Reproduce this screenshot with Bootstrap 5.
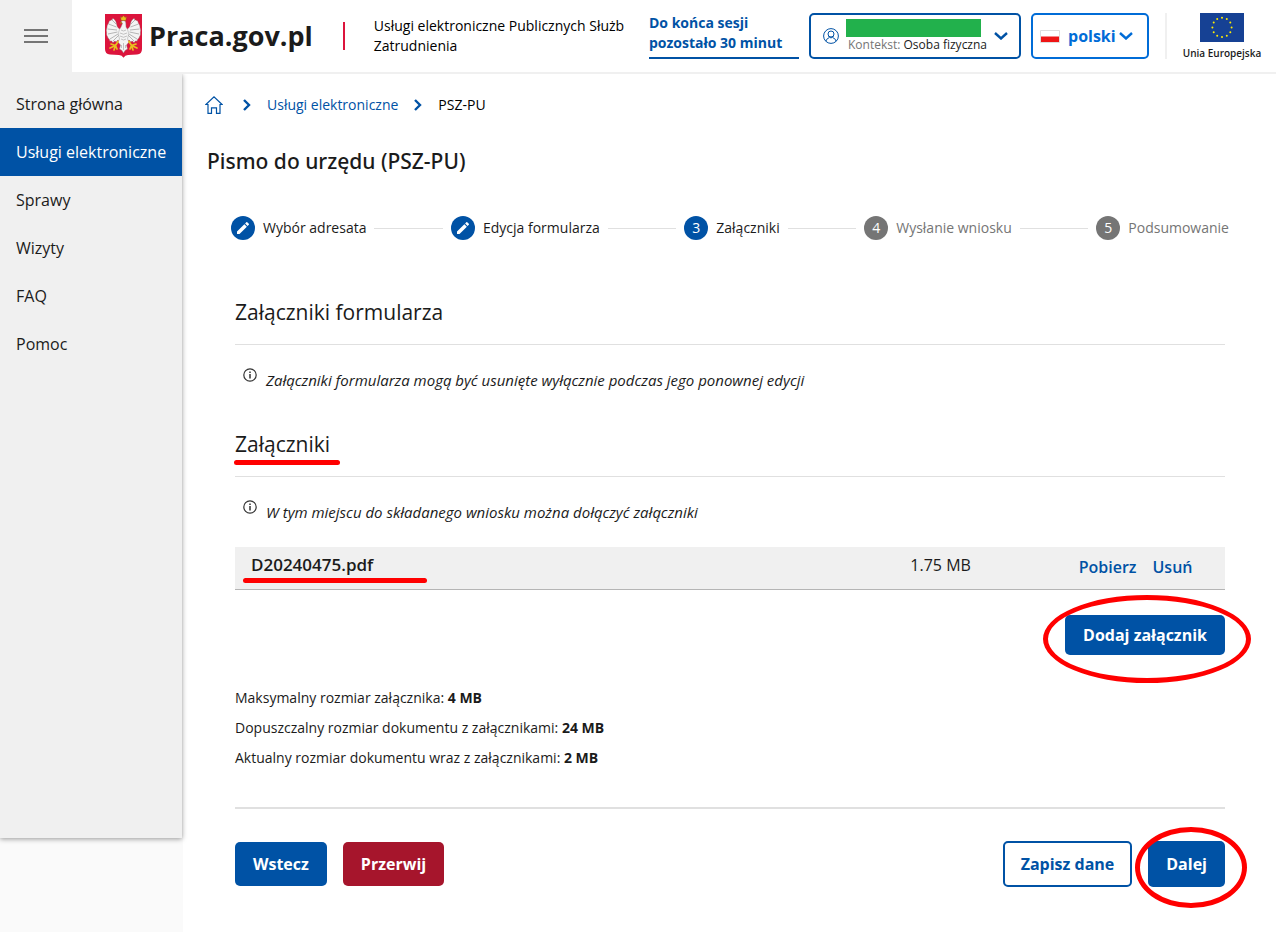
<!DOCTYPE html>
<html lang="pl">
<head>
<meta charset="utf-8">
<meta name="viewport" content="width=device-width, initial-scale=1">
<title>Pismo do urzędu (PSZ-PU) – Praca.gov.pl</title>
<link href="https://cdn.jsdelivr.net/npm/bootstrap@5.3.0/dist/css/bootstrap.min.css" rel="stylesheet">
<style>
  :root { --blue: #0052a5; --bright: #006cd7; --ink: #1b1b1b; --soft: #f0f0f0; --rule: #e0e0e0; }
  body { font-family: "Open Sans", "Noto Sans", sans-serif; font-size: 14px; line-height: 20px; color: var(--ink); }
  a { color: var(--blue); text-decoration: none; }
  svg { display: block; flex: none; }
  .topbar { border-bottom: 2px solid var(--soft); }
  .menu-toggle { width: 72px; height: 74px; background: var(--soft); border: 0; margin-bottom: -2px; padding: 0 24px 2px; }
  .brand { color: var(--ink); font-size: 27px; font-weight: 700; line-height: 40px; margin-left: 33px; gap: 7px; }
  .brand-rule { width: 2px; height: 28px; background: #dc143c; margin-left: 30px; }
  .tagline { width: 260px; margin-left: 29px; color: #000; }
  .session { width: 150px; color: var(--blue); font-weight: 700; border-bottom: 2px solid var(--blue); padding-bottom: 4px; }
  .head-btn { height: 46px; border: 2px solid var(--blue); border-radius: 5px; background: #fff; color: var(--ink); margin-left: 10px; padding: 0 14px 0 12px; }
  .user-btn { width: 212px; gap: 7px; }
  .user-name { width: 135px; height: 18px; background: #22b14c; }
  .user-ctx { font-size: 12px; line-height: 16px; padding-left: 2px; white-space: nowrap; }
  .user-ctx span { color: #757575; }
  .lang-btn { width: 118px; border-color: var(--bright); color: var(--bright); font-size: 16px; font-weight: 700; padding: 0 14px 0 7px; }
  .eu { border-left: 2px solid var(--soft); height: 46px; padding-left: 17px; width: 95px; font-size: 10px; font-weight: 600; line-height: 14px; white-space: nowrap; }
  .side { width: 183px; background: #fafafa; padding-bottom: 94px; }
  .side-nav { background: var(--soft); width: 182px; padding-top: 6px; box-shadow: 0 1px 5px rgba(0,0,0,.4); clip-path: inset(0 -8px -8px 0); }
  .side-nav .nav-link { color: var(--ink); font-size: 16px; line-height: 24px; padding: 12px 16px; white-space: nowrap; }
  .side-nav .nav-link.active { background: var(--blue); color: #fff; }
  .crumbs { padding: 21px 0 0 22px; gap: 16px; line-height: 20px; }
  .page-title { font-family: "Noto Sans", sans-serif; font-size: 21px; font-weight: 500; line-height: 28px; margin: 32px 0 0 24px; }
  .steps { margin: 41px 47px 0 48px; padding: 0; gap: 8px; list-style: none; }
  .step { gap: 8px; white-space: nowrap; }
  .step-dot { width: 24px; height: 24px; border-radius: 50%; background: var(--blue); color: #fff; }
  .step-off { color: #757575; }
  .step-off .step-dot { background: #757575; }
  .step-line { height: 1px; background: var(--rule); }
  .body-block { margin: 0 51px 0 52px; }
  .sect { font-size: 21px; font-weight: 400; line-height: 32px; padding-bottom: 16px; margin: 56px 0 0; border-bottom: 1px solid var(--rule); }
  .hint + .sect { margin-top: 36px; }
  .hint { font-size: 15px; padding: 23px 8px 0; gap: 9px; font-style: italic; line-height: 24px; margin: 0; }
  .files { --bs-table-bg: var(--soft); border-color: #b5b5b5; color: var(--ink); font-size: 16px; line-height: 24px; table-layout: fixed; margin: 23px 0 25px; }
  .files > tbody > tr > td { padding: 6px 16px 12px; }
  .files > tbody > tr > .file-acts { padding: 8px 0 10px 16px; font-weight: 600; }
  .act-btn { border: 0; border-radius: 5px; background: var(--blue); color: #fff; font-size: 16px; font-weight: 700; line-height: 24px; padding: 10px 18px; }
  .act-red { background: #a6152c; }
  .act-line { background: #fff; color: var(--blue); border: 2px solid var(--blue); padding: 9px 16px; }
  .act-short { padding: 8px 18px; }
  .act-tall { padding: 11px 18px; }
  .limits { line-height: 30px; margin: 28px 0 0; }
  .limits b { font-weight: 700; }
  .end-rule { height: 2px; background: var(--rule); margin: 34px 0 32px; }
  /* red marker annotations */
  .marked { position: relative; }
  .marked::after { content: ""; position: absolute; height: 5px; border-radius: 3px; background: #f00; }
  .mark-head::after { left: -1px; right: -10px; bottom: -7px; }
  .mark-file { font-size: 17px; font-weight: 600; }
  .mark-file::after { left: -8px; width: 184px; bottom: -7px; }
  .ringed::after { content: ""; position: absolute; border: 5px solid #f00; border-radius: 50%; pointer-events: none; }
  .ringed.ring-add::after { inset: -20px -26px -28px -22px; }
  .ringed.ring-next::after { inset: -14px -22px -21px -13px; }
</style>
</head>
<body class="d-flex flex-column min-vh-100 bg-white">

<header class="topbar d-flex align-items-center">
  <button class="menu-toggle" type="button" aria-label="Menu">
    <svg width="24" height="14" viewBox="0 0 24 14" fill="#757575"><path d="M0 0h24v2H0zM0 6h24v2H0zM0 12h24v2H0z"/></svg>
  </button>
  <a class="brand d-flex align-items-center" href="#">
    <svg width="37" height="44" viewBox="0 0 37 44">
      <path d="M0 0h37v35q0 5-5 5.500l-9 .5q-3 .3-4.500 2.700Q17 41.300 14 41l-9-.5Q0 40 0 35z" fill="#dc143c"/>
      <g fill="#f4f4f4" stroke="#8d5358" stroke-width=".4">
        <path d="M17.500 15C14 16 12 13 11.500 9.500 11 6.500 9 4.500 7.500 4.200 8 6 6 6 5 6.500 3.500 7.500 4 9 3 10 1.500 11.500 2.500 13 1.500 15 .8 17 2 18 1.500 20 1.500 22 3 22.500 3 24.500 4 24 4.500 25.500 5 27.500 6 26.500 7 27 8 29 9 27 10 27 11.500 28 12 26 13.500 26 14.500 27L18 22z"/>
        <path d="M11 10 7 6M11.500 13 3.500 10M12 16 2.500 15M12.500 18 3 20M13 20 5 25M14 21 8 27" fill="none" stroke-width=".7" stroke="#999"/>
      </g>
      <g transform="matrix(-1 0 0 1 37 0)" fill="#f4f4f4" stroke="#8d5358" stroke-width=".4">
        <path d="M17.500 15C14 16 12 13 11.500 9.500 11 6.500 9 4.500 7.500 4.200 8 6 6 6 5 6.500 3.500 7.500 4 9 3 10 1.500 11.500 2.500 13 1.500 15 .8 17 2 18 1.500 20 1.500 22 3 22.500 3 24.500 4 24 4.500 25.500 5 27.500 6 26.500 7 27 8 29 9 27 10 27 11.500 28 12 26 13.500 26 14.500 27L18 22z"/>
        <path d="M11 10 7 6M11.500 13 3.500 10M12 16 2.500 15M12.500 18 3 20M13 20 5 25M14 21 8 27" fill="none" stroke-width=".7" stroke="#999"/>
      </g>
      <path d="M15.800 8 18 6.500Q21 6.500 20.800 9.500L21 13Q25 18 22.500 25L24 28 21.500 31 22.500 35 20 36.500 18.500 39 17 36.500 14.500 35 15.500 31 13 28 14.500 25Q12 18 16 13L17.500 9.500z" fill="#f4f4f4" stroke="#888" stroke-width=".4"/>
      <path d="M16 16q2.500 2 5 0M15 19q3.500 2.500 7 0M15 22q3.500 2.500 7 0M16 25q2.500 2 5 0M18.500 29v7M16.500 31v3M20.500 31v3" fill="none" stroke="#aaa" stroke-width=".7"/>
      <path d="M15.500 2.500 17 3.500 18.500 1.500 20 3.500 21.500 2.500 20.800 6.500H16.200zM15.800 8l-1 1.500 2.500-.5z" fill="#e8c020" stroke="#8a5510" stroke-width=".4"/>
      <path d="M13 27.500 10.500 31.500 6 30M10.500 31.500 5 34M10.500 31.500 9 36M10.500 31.500 12 35M24 27.500 26.500 31.500 31 30M26.500 31.500 32 34M26.500 31.500 28 36M26.500 31.500 25 35" fill="none" stroke="#e8c020" stroke-width="1.700" stroke-linecap="round"/>
    </svg>
    <span>Praca.gov.pl</span>
  </a>
  <div class="brand-rule"></div>
  <div class="tagline">Usługi elektroniczne Publicznych Służb Zatrudnienia</div>
  <div class="session ms-auto">Do końca sesji pozostało 30 minut</div>
  <button class="head-btn user-btn d-flex align-items-center" type="button">
    <svg width="16" height="16" viewBox="0 0 16 16" fill="none" stroke="#0052a5"><circle cx="8" cy="8" r="7.400"/><circle cx="8" cy="6" r="3"/><path d="M2.800 13.200Q4 10 6.200 9.700M13.200 13.200Q12 10 9.800 9.700M5.500 8.500Q8 11.500 10.500 8.500"/></svg>
    <span class="text-start">
      <span class="user-name d-block"></span>
      <span class="user-ctx d-block"><span>Kontekst:</span> Osoba fizyczna</span>
    </span>
    <svg class="ms-auto" width="14" height="8" viewBox="0 0 14 8" fill="none" stroke="#0052a5" stroke-width="2.400"><path d="M1 1l6 5.500L13 1"/></svg>
  </button>
  <button class="head-btn lang-btn d-flex align-items-center" type="button">
    <svg width="20" height="13" viewBox="0 0 20 13"><path d="M.5.500h19v12H.5z" fill="#fff" stroke="#ddd"/><path d="M1 6.500h18V12H1z" fill="#ee1515"/></svg>
    <span class="ms-2">polski</span>
    <svg class="ms-auto" width="14" height="8" viewBox="0 0 14 8" fill="none" stroke="#006cd7" stroke-width="2.400"><path d="M1 1l6 5.500L13 1"/></svg>
  </button>
  <div class="eu d-flex flex-column align-items-center ms-3 me-3">
    <svg width="44" height="29" viewBox="0 0 44 29"><path d="M0 0h44v29H0z" fill="#164194"/><path d="M22 4.800h.01M26.800 6.100h.01M30.300 9.600h.01M31.600 14.400h.01M30.300 19.200h.01M26.800 22.700h.01M22 24h.01M17.200 22.700h.01M13.700 19.200h.01M12.400 14.400h.01M13.700 9.600h.01M17.200 6.100h.01" stroke="#ffed00" stroke-width="2" stroke-linecap="round"/></svg>
    <span class="mt-1">Unia Europejska</span>
  </div>
</header>

<div class="d-flex flex-grow-1">
  <aside class="side d-flex flex-column flex-shrink-0">
    <nav class="side-nav nav flex-column flex-nowrap flex-grow-1">
      <a class="nav-link" href="#">Strona główna</a>
      <a class="nav-link active" href="#" aria-current="page">Usługi elektroniczne</a>
      <a class="nav-link" href="#">Sprawy</a>
      <a class="nav-link" href="#">Wizyty</a>
      <a class="nav-link" href="#">FAQ</a>
      <a class="nav-link" href="#">Pomoc</a>
    </nav>
  </aside>

  <main class="flex-grow-1">
    <nav class="crumbs d-flex align-items-center" aria-label="Okruszki">
      <a class="me-1" href="#" aria-label="Strona główna"><svg width="18" height="18" viewBox="0 0 18 18" fill="none" stroke="#0052a5" stroke-width="1.200"><path d="M3 8.500H.9L9 .9l8.100 7.600H15v8.900h-3.500v-5.500h-5v5.500H3z"/></svg></a>
      <svg width="8" height="12" viewBox="0 0 8 12" fill="none" stroke="#0052a5" stroke-width="2.400"><path d="M1 1l5 5-5 5"/></svg>
      <a href="#">Usługi elektroniczne</a>
      <svg width="8" height="12" viewBox="0 0 8 12" fill="none" stroke="#0052a5" stroke-width="2.400"><path d="M1 1l5 5-5 5"/></svg>
      <span class="text-black">PSZ-PU</span>
    </nav>

    <h1 class="page-title">Pismo do urzędu (PSZ-PU)</h1>

    <ol class="steps d-flex align-items-center">
      <li class="step d-flex align-items-center"><span class="step-dot d-flex align-items-center justify-content-center"><svg width="16" height="16" viewBox="0 0 24 24" fill="#fff"><path d="M3 17.250V21h3.750L17.810 9.940l-3.750-3.750L3 17.250zM20.710 7.040a1 1 0 0 0 0-1.410l-2.340-2.340a1 1 0 0 0-1.410 0l-1.830 1.830 3.750 3.750 1.830-1.830z"/></svg></span>Wybór adresata</li>
      <li class="step-line flex-fill" aria-hidden="true"></li>
      <li class="step d-flex align-items-center"><span class="step-dot d-flex align-items-center justify-content-center"><svg width="16" height="16" viewBox="0 0 24 24" fill="#fff"><path d="M3 17.250V21h3.750L17.810 9.940l-3.750-3.750L3 17.250zM20.710 7.040a1 1 0 0 0 0-1.410l-2.340-2.340a1 1 0 0 0-1.410 0l-1.830 1.830 3.750 3.750 1.830-1.830z"/></svg></span>Edycja formularza</li>
      <li class="step-line flex-fill" aria-hidden="true"></li>
      <li class="step d-flex align-items-center" aria-current="step"><span class="step-dot d-flex align-items-center justify-content-center">3</span>Załączniki</li>
      <li class="step-line flex-fill" aria-hidden="true"></li>
      <li class="step step-off d-flex align-items-center"><span class="step-dot d-flex align-items-center justify-content-center">4</span>Wysłanie wniosku</li>
      <li class="step-line flex-fill" aria-hidden="true"></li>
      <li class="step step-off d-flex align-items-center"><span class="step-dot d-flex align-items-center justify-content-center">5</span>Podsumowanie</li>
    </ol>

    <div class="body-block">
      <h2 class="sect">Załączniki formularza</h2>
      <p class="hint d-flex"><svg width="14" height="14" viewBox="0 0 14 14" fill="none" stroke="#333" stroke-width="1.200"><circle cx="7" cy="7" r="6.200"/><path d="M7 6v4.500M7 3.500V5" stroke-width="1.500"/></svg><span>Załączniki formularza mogą być usunięte wyłącznie podczas jego ponownej edycji</span></p>

      <h2 class="sect"><span class="marked mark-head">Załączniki</span></h2>
      <p class="hint d-flex"><svg width="14" height="14" viewBox="0 0 14 14" fill="none" stroke="#333" stroke-width="1.200"><circle cx="7" cy="7" r="6.200"/><path d="M7 6v4.500M7 3.500V5" stroke-width="1.500"/></svg><span>W tym miejscu do składanego wniosku można dołączyć załączniki</span></p>

      <table class="files table">
        <colgroup><col><col style="width:17%"><col style="width:16.400%"></colgroup>
        <tbody>
          <tr>
            <td><span class="marked mark-file">D20240475.pdf</span></td>
            <td>1.75 MB</td>
            <td class="file-acts"><a href="#" class="me-3">Pobierz</a><a href="#">Usuń</a></td>
          </tr>
        </tbody>
      </table>

      <div class="d-flex justify-content-end">
        <div class="position-relative ringed ring-add d-flex"><button class="act-btn act-short" type="button">Dodaj załącznik</button></div>
      </div>

      <p class="limits">Maksymalny rozmiar załącznika: <b>4 MB</b><br>Dopuszczalny rozmiar dokumentu z załącznikami: <b>24 MB</b><br>Aktualny rozmiar dokumentu wraz z załącznikami: <b>2 MB</b></p>

      <div class="end-rule"></div>

      <div class="d-flex align-items-center gap-3">
        <button class="act-btn" type="button">Wstecz</button>
        <button class="act-btn act-red" type="button">Przerwij</button>
        <button class="act-btn act-line ms-auto" type="button">Zapisz dane</button>
        <div class="position-relative ringed ring-next d-flex"><button class="act-btn act-tall" type="button">Dalej</button></div>
      </div>
    </div>
  </main>
</div>

<script src="https://cdn.jsdelivr.net/npm/bootstrap@5.3.0/dist/js/bootstrap.bundle.min.js"></script>
</body>
</html>
